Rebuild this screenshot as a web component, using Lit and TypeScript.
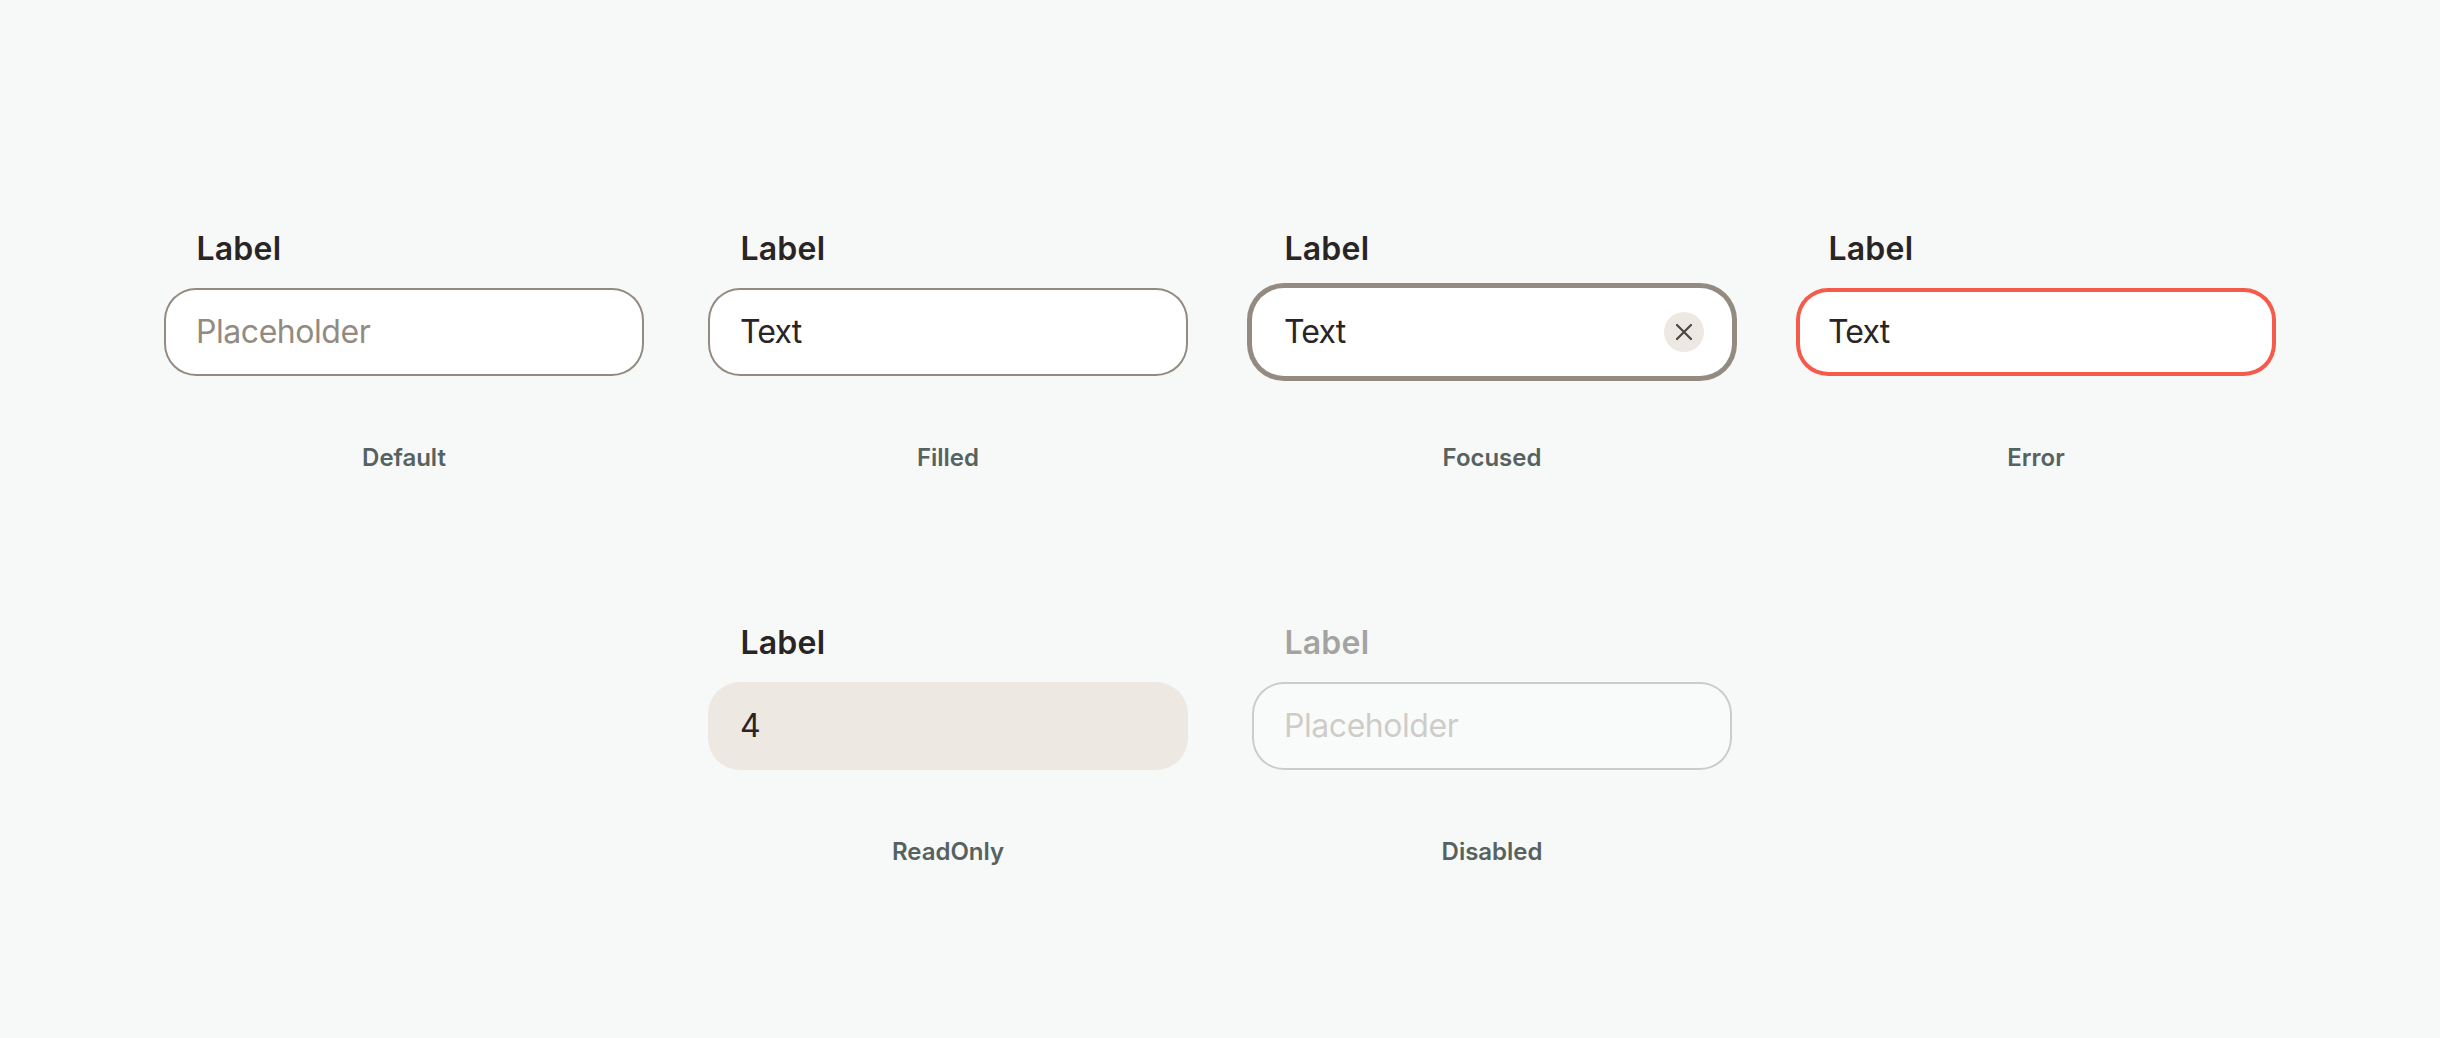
import { LitElement, html, css, nothing } from "lit";
import { customElement, property } from "lit/decorators.js";

@customElement("text-field")
class TextField extends LitElement {
  @property() state = "default";
  @property() text = "";

  static styles = css`
    :host {
      display: block;
      width: 480px;
      font-family: Inter, "Liberation Sans", sans-serif;
      color: #292524;
    }
    .label {
      padding-left: 32.5px;
      height: 40px;
      line-height: 40px;
      font-size: 32px;
      font-weight: 600;
      letter-spacing: 0.2px;
    }
    .box {
      box-sizing: border-box;
      display: flex;
      align-items: center;
      justify-content: space-between;
      height: 88px;
      margin-top: 19px;
      padding: 0 28px 0 32px;
      border-radius: 32px;
      background: #fff;
      box-shadow: inset 0 0 0 2px #938b82;
    }
    .value {
      font-size: 32px;
      line-height: 40px;
      letter-spacing: -0.8px;
    }
    .placeholder {
      color: #938b82;
      letter-spacing: -0.45px;
    }
    .focused .box {
      box-shadow: 0 0 0 5px #938b82;
    }
    .error .box {
      box-shadow: inset 0 0 0 4px #f55b4a;
    }
    .readonly .box {
      background: #ede8e2;
      box-shadow: none;
    }
    .disabled {
      opacity: 0.4;
    }
    .disabled .box {
      background: #fdfffe;
    }
    .clear {
      display: block;
      width: 40px;
      height: 40px;
    }
    .caption {
      margin-top: 67px;
      height: 30px;
      line-height: 30px;
      text-align: center;
      font-size: 24px;
      font-weight: 600;
      letter-spacing: -0.03px;
      color: #566260;
    }
  `;

  render() {
    const state = this.state.toLowerCase();
    const placeholder = this.text === "Placeholder";
    return html`
      <div class=${state}>
        <div class="label">Label</div>
        <div class="box">
          <span class="value ${placeholder ? "placeholder" : ""}">${this.text}</span>
          ${state === "focused"
            ? html`<svg class="clear" viewBox="0 0 40 40">
                <circle cx="20" cy="20" r="20" fill="#ede8e2" />
                <path d="M13 13 27 27M27 13 13 27" fill="none" stroke="#4b4643" stroke-width="2.2" stroke-linecap="round" />
              </svg>`
            : nothing}
        </div>
      </div>
      <div class="caption">${this.state}</div>
    `;
  }
}

const rows = [
  [
    ["Default", "Placeholder"],
    ["Filled", "Text"],
    ["Focused", "Text"],
    ["Error", "Text"],
  ],
  [
    ["ReadOnly", "4"],
    ["Disabled", "Placeholder"],
  ],
];

@customElement("app-root")
class AppRoot extends LitElement {
  static styles = css`
    :host {
      display: block;
      background: #f7f9f8;
    }
    .page {
      box-sizing: border-box;
      height: 1038px;
      padding-top: 229px;
      display: flex;
      flex-direction: column;
      gap: 150px;
    }
    .row {
      display: flex;
      justify-content: center;
      gap: 64px;
    }
  `;

  render() {
    return html`<div class="page">
      ${rows.map(
        (row) => html`<div class="row">
          ${row.map(([state, text]) => html`<text-field state=${state} text=${text}></text-field>`)}
        </div>`,
      )}
    </div>`;
  }
}
